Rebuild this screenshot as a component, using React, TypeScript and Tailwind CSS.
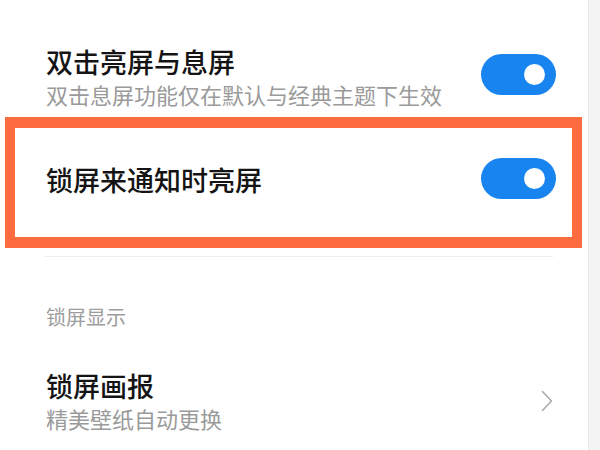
import React from "react";

const font = { fontFamily: '"Noto Sans CJK SC", "Noto Sans", sans-serif' };

function Toggle({ className = "" }: { className?: string }) {
  return (
    <div className={"flex h-[41px] w-[75px] shrink-0 items-center justify-end rounded-full bg-[#1784f0] pr-[11px] " + className}>
      <div className="h-[21px] w-[21px] rounded-full bg-white" />
    </div>
  );
}

export default function App() {
  return (
    <div className="flex h-[450px] w-[600px] overflow-hidden bg-white" style={font}>
      <div className="flex flex-1 flex-col">
        <div className="flex items-start pl-[46px] pr-[32px] pt-[45px]">
          <div className="flex flex-1 flex-col">
            <div className="text-[27px] font-medium leading-[34px] text-[#141414]">双击亮屏与息屏</div>
            <div className="text-[22px] leading-[30px] text-[#9a9a9a]">双击息屏功能仅在默认与经典主题下生效</div>
          </div>
          <Toggle className="mt-[9px]" />
        </div>
        <div className="ml-[5px] mt-[8px] flex h-[131px] w-[577px] items-center border-[11px] border-l-[10px] border-r-[10px] border-[#fd6b3e] pb-[5px] pl-[31px] pr-[16px]">
          <div className="flex-1 text-[27px] font-medium leading-[34px] text-[#141414]">锁屏来通知时亮屏</div>
          <Toggle className="mb-[4px]" />
        </div>
        <div className="ml-[45px] mr-[35px] mt-[8px] h-px bg-[#ececec]" />
        <div className="ml-[46px] mt-[47px] text-[20px] leading-[26px] text-[#9d9d9d]">锁屏显示</div>
        <div className="mt-[39px] flex items-center pl-[46px] pr-[35px]">
          <div className="flex flex-1 flex-col">
            <div className="text-[27px] font-medium leading-[34px] text-[#141414]">锁屏画报</div>
            <div className="text-[22px] leading-[30px] text-[#9a9a9a]">精美壁纸自动更换</div>
          </div>
          <svg width="12" height="22" viewBox="0 0 12 22" fill="none">
            <path d="M1.5 1.5 L10.5 11 L1.5 20.5" stroke="#ababab" strokeWidth="1.6" strokeLinecap="round" strokeLinejoin="round" />
          </svg>
        </div>
      </div>
      <div className="w-[12px] border-l border-[#e9e9e9] bg-[#f4f4f4]" />
    </div>
  );
}
